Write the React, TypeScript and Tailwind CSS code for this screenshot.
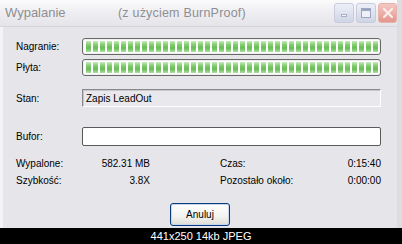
import React from "react";

const segs = Array.from({ length: 42 });

function Bar() {
  return (
    <div className="h-[17px] w-[299px] rounded-[3px] border border-[#686868] bg-white p-[2px] pl-[3px] flex gap-[2px] items-stretch shadow-[inset_0_0_0_1px_#f0f0f0]">
      {segs.map((_, i) => (
        <div
          key={i}
          className="w-[5px] shrink-0 bg-[linear-gradient(to_bottom,#c8ecbe,#80cc6e_35%,#68bc56_65%,#addfa0)]"
        />
      ))}
    </div>
  );
}

export default function App() {
  return (
    <div
      className="w-[402px] h-[244px] flex flex-col bg-black overflow-hidden"
      style={{ fontFamily: '"Liberation Sans", Arial, sans-serif' }}
    >
      <div className="h-[228px] flex flex-col bg-[#e6e6ea] border-l-[3px] border-l-[#f4f4f6] border-r-[5px] border-r-[#dcdce2] relative">
        {/* title bar */}
        <div className="h-[27px] flex items-center bg-[linear-gradient(to_bottom,#fbfbfc,#eeeef2_50%,#e4e4e9)] border-b border-[#d4d4da] -ml-[3px] pl-[5px]">
          <span className="text-[13px] text-[#8e8e92] w-[113px]">Wypalanie</span>
          <span className="text-[12.5px] text-[#8e8e92] tracking-[0.2px]">(z użyciem BurnProof)</span>
          <div className="ml-auto flex gap-[2px] items-center">
            <div className="w-[20px] h-[20px] rounded-[3px] border border-[#c7cbdc] bg-[linear-gradient(to_bottom,#eef0f8,#cfd4e6)] flex items-end justify-center pb-[5px]">
              <div className="w-[6px] h-[3px] bg-[#f8f8fc] border border-[#a8aec4]" />
            </div>
            <div className="w-[20px] h-[20px] rounded-[3px] border border-[#c7cbdc] bg-[linear-gradient(to_bottom,#eef0f8,#cfd4e6)] flex items-center justify-center">
              <div className="w-[10px] h-[10px] border border-[#9ea5c0] border-t-[3px] bg-[#eef0f8]" />
            </div>
            <div className="w-[19px] h-[20px] rounded-[3px] border border-[#e6b2ac] bg-[linear-gradient(to_bottom,#f4c8c2,#e3968c)] flex items-center justify-center">
              <svg width="12" height="12" viewBox="0 0 12 12">
                <path d="M2 2 L10 10 M10 2 L2 10" stroke="#fbeeee" strokeWidth="2.2" strokeLinecap="round" />
              </svg>
            </div>
          </div>
        </div>

        {/* body */}
        <div className="flex flex-col pl-[13px] text-[10px] text-black">
          <div className="flex items-center mt-[11px]">
            <span className="w-[66px]">Nagranie:</span>
            <Bar />
          </div>
          <div className="flex items-center mt-[4px]">
            <span className="w-[66px]">Płyta:</span>
            <Bar />
          </div>
          <div className="flex items-center mt-[13px]">
            <span className="w-[66px]">Stan:</span>
            <div className="h-[18px] w-[299px] border-t border-l border-t-[#8a8a8e] border-l-[#8a8a8e] border-b border-r border-b-white border-r-white bg-[#e9e9ed] flex items-center pl-[3px] shadow-[inset_1px_1px_0_#c8c8cc]">
              Zapis LeadOut
            </div>
          </div>
          <div className="flex items-center mt-[20px]">
            <span className="w-[66px]">Bufor:</span>
            <div className="h-[19px] w-[299px] rounded-[2px] border border-[#5a5a5a] bg-white" />
          </div>

          <div className="grid grid-cols-[134px_70px_161px] mt-[11px] leading-[14px] gap-y-[3px]">
            <div className="flex justify-between">
              <span>Wypalone:</span>
              <span>582.31 MB</span>
            </div>
            <span className="col-start-3 flex justify-between">
              <span>Czas:</span>
              <span>0:15:40</span>
            </span>
            <div className="flex justify-between">
              <span>Szybkość:</span>
              <span>3.8X</span>
            </div>
            <span className="col-start-3 flex justify-between">
              <span>Pozostało około:</span>
              <span>0:00:00</span>
            </span>
          </div>

          <div className="flex mt-[15px] pl-[154px]">
            <div className="w-[60px] h-[23px] rounded-[3px] border border-[#0b3b78] bg-[linear-gradient(to_bottom,#ffffff,#f2f2f0_60%,#dedcd6)] flex items-center justify-center shadow-[inset_0_0_0_1px_#c6d6f2]">
              <span className="text-[10px]">Anuluj</span>
            </div>
          </div>
        </div>
      </div>
      <div className="h-[16px] flex items-center justify-center text-white text-[11px] pt-[1px]">
        441x250 14kb JPEG
      </div>
    </div>
  );
}
